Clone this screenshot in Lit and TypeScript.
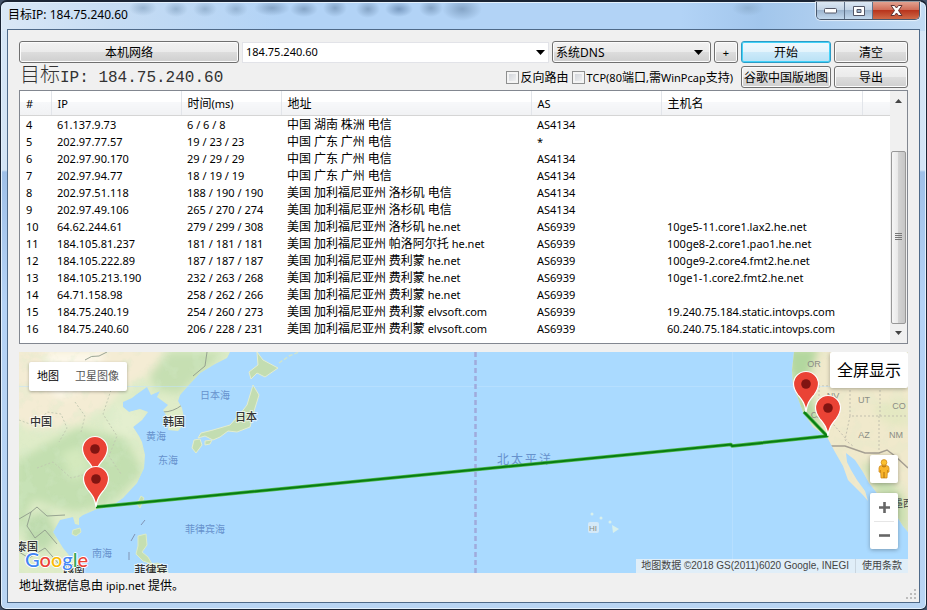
import { LitElement, html, css, svg } from "lit";
import { customElement, state } from "lit/decorators.js";

/** Sets Chinese runs one step larger than the Latin text around them. */
const mixed = (text: string) =>
  text
    .split(/([\u3000-\u9fff\uff00-\uffef]+)/)
    .filter((part) => part !== "")
    .map((part) => (/[\u3000-\u9fff\uff00-\uffef]/.test(part) ? html`<span class="han">${part}</span>` : part));

const columns = ["#", "IP", "时间(ms)", "地址", "AS", "主机名", ""];

const hops: string[][] = [
  ["4", "61.137.9.73", "6 / 6 / 8", "中国 湖南 株洲 电信", "AS4134", ""],
  ["5", "202.97.77.57", "19 / 23 / 23", "中国 广东 广州 电信", "*", ""],
  ["6", "202.97.90.170", "29 / 29 / 29", "中国 广东 广州 电信", "AS4134", ""],
  ["7", "202.97.94.77", "18 / 19 / 19", "中国 广东 广州 电信", "AS4134", ""],
  ["8", "202.97.51.118", "188 / 190 / 190", "美国 加利福尼亚州 洛杉矶 电信", "AS4134", ""],
  ["9", "202.97.49.106", "265 / 270 / 274", "美国 加利福尼亚州 洛杉矶 电信", "AS4134", ""],
  ["10", "64.62.244.61", "279 / 299 / 308", "美国 加利福尼亚州 洛杉矶 he.net", "AS6939", "10ge5-11.core1.lax2.he.net"],
  ["11", "184.105.81.237", "181 / 181 / 181", "美国 加利福尼亚州 帕洛阿尔托 he.net", "AS6939", "100ge8-2.core1.pao1.he.net"],
  ["12", "184.105.222.89", "187 / 187 / 187", "美国 加利福尼亚州 费利蒙 he.net", "AS6939", "100ge9-2.core4.fmt2.he.net"],
  ["13", "184.105.213.190", "232 / 263 / 268", "美国 加利福尼亚州 费利蒙 he.net", "AS6939", "10ge1-1.core2.fmt2.he.net"],
  ["14", "64.71.158.98", "258 / 262 / 266", "美国 加利福尼亚州 费利蒙 he.net", "AS6939", ""],
  ["15", "184.75.240.19", "254 / 260 / 273", "美国 加利福尼亚州 费利蒙 elvsoft.com", "AS6939", "19.240.75.184.static.intovps.com"],
  ["16", "184.75.240.60", "206 / 228 / 231", "美国 加利福尼亚州 费利蒙 elvsoft.com", "AS6939", "60.240.75.184.static.intovps.com"],
];

const pin = (x: number, y: number) => svg`
  <g transform="translate(${x} ${y})">
    <path d="M0 0C-1-9-4-12-8-17C-11-21-12.500-24-12.500-28A12.500 12.500 0 0 1 12.500-28C12.500-24 11-21 8-17C4-12 1-9 0 0Z" fill="#ea4335" stroke="#fff" stroke-width="1.200"/>
    <circle cy="-28" r="4.800" fill="#811411"/>
  </g>`;

const asia =
  "M0 0H211L208 6L196 12L181 21L168 35L161 43L159 49L163 56L166 71L159 79L149 78L150 68L144 58L149 53L138 45L141 39L132 43L128 35L118 42L113 46L104 50L104 55L110 60L121 57L129 60L123 68L114 75L120 84L123 90L126 103L125 116L118 131L104 146L91 155L78 157L64 163L60 166L60 173L56 172L54 165L41 168L34 180L44 196L58 213L59 221H0Z";
const america =
  "M775 0L773 18L774 33L784 60L794 75L808 85L816 100L824 114L829 128L844 143L849 149L846 139L838 128L832 118L828 110L827 101L836 108L844 120L850 131L862 146L874 158L884 174L889 180V0Z";
const japan =
  "M238 0L244 8L259 16L246 25L238 21L232 27L230 20L239 13ZM234 33L240 43L236 56L231 75L218 80L209 79L201 85L194 88L186 84L179 86L182 81L194 78L211 73L221 62L228 53ZM175 88L181 87L183 93L177 101L173 96ZM186 89L193 88L191 92L186 93Z";
const isles =
  "M122 144L125 146L121 156L118 152ZM54 178L61 176L62 180L57 184L53 182ZM119 184L127 182L128 193L123 200L129 205L133 212L124 209L117 202L119 194ZM127 213L139 211L147 216L149 221H131Z";

@customElement("app-root")
export class AppRoot extends LitElement {
  @state() private target = "184.75.240.60";

  static styles = css`
    :host {
      display: block;
      min-height: 100vh;
      background: #44536a;
      color: #000;
      font-family: "Noto Sans", "Noto Sans CJK SC", sans-serif;
      font-size: 11px;
      line-height: 17px;
    }
    * {
      box-sizing: border-box;
    }
    button,
    input,
    select {
      margin: 0;
      padding: 0;
      font: inherit;
      color: inherit;
    }
    .han {
      font-size: 12px;
    }
    .window {
      display: flex;
      flex-direction: column;
      min-height: 100vh;
      padding: 0 6px 6px;
      border: 1px solid #1a2434;
      border-top-width: 2px;
      border-radius: 7px 7px 6px 6px;
      box-shadow: inset 0 0 0 1px #e4f1fd;
      background:
        radial-gradient(ellipse 14px 8px at 142px 6px, #7d9cbb99, transparent),
        radial-gradient(ellipse 12px 8px at 175px 7px, #7d9cbb99, transparent),
        radial-gradient(ellipse 12px 8px at 204px 7px, #7d9cbb99, transparent),
        radial-gradient(ellipse 12px 8px at 235px 7px, #7d9cbb99, transparent),
        radial-gradient(ellipse 18px 8px at 271px 6px, #6685a799, transparent),
        radial-gradient(ellipse 14px 8px at 303px 7px, #6685a799, transparent),
        radial-gradient(ellipse 12px 9px at 334px 6px, #6685a799, transparent),
        radial-gradient(ellipse 12px 9px at 367px 7px, #6685a799, transparent),
        radial-gradient(ellipse 14px 8px at 398px 7px, #5c7ea6aa, transparent),
        radial-gradient(ellipse 12px 9px at 430px 6px, #6685a799, transparent),
        radial-gradient(ellipse 20px 12px at 461px 7px, #6685a799, transparent),
        radial-gradient(ellipse 16px 8px at 747px 6px, #84a5c499, transparent),
        linear-gradient(90deg, #dae8f6 0, #c6dcf3 110px, #b2d3f6 280px, #b2d3f6 680px, #a2c6ec 760px, #c3dbf3) 0 0 / 100% 29px no-repeat,
        linear-gradient(#d6e6f6, #d3e4f5 168px, #9fc0e8 170px, #b4d2f5 300px, #b9d5f4);
    }
    .titlebar {
      display: flex;
      justify-content: space-between;
      align-items: flex-start;
      height: 27px;
    }
    .title {
      margin: 0;
      padding: 4px 1px;
      font-size: 12px;
      font-weight: 400;
      line-height: 17px;
    }
    .caption {
      display: flex;
      height: 18px;
      border: 1px solid #48586d;
      border-top: 0;
      border-radius: 0 0 5px 5px;
      overflow: hidden;
      box-shadow: 0 0 1px 1px #ffffff99;
    }
    .caption-button {
      display: grid;
      place-items: center;
      width: 28px;
      border: 0;
      border-right: 1px solid #60728a;
      background: linear-gradient(#dce8f4, #c1d2e4 48%, #9db5cf 50%, #c2d8ed);
    }
    .caption-button.close {
      width: 46px;
      border-right: 0;
      background: linear-gradient(#e3a18f, #cf6b56 48%, #b8351d 50%, #cf6a48);
    }
    .client {
      flex: 1;
      display: flex;
      flex-direction: column;
      padding: 11px 11px 6px;
      border: 1px solid #4f6a89;
      background: #f0f0f0;
    }
    .bar {
      display: flex;
      align-items: center;
      gap: 3px;
      height: 22px;
    }
    .bar + .bar {
      height: 24px;
      margin-top: 2px;
      margin-bottom: 1px;
    }
    .push {
      height: 22px;
      padding-top: 1px;
      border: 1px solid #707070;
      border-radius: 3px;
      box-shadow: inset 0 0 0 1px #fcfcfc;
      background: linear-gradient(#f2f2f2, #ebebeb 48%, #dddddd 50%, #cfcfcf);
      white-space: nowrap;
      line-height: 18px;
    }
    .local {
      width: 220px;
    }
    .plus {
      width: 24px;
    }
    .main {
      width: 90px;
    }
    .side {
      width: 74px;
    }
    .start {
      border-color: #2c9cc6;
      box-shadow: inset 0 0 0 1px #43d2f8;
      background: linear-gradient(#f0f9fd, #e4f4fc 48%, #cdeafa 50%, #b9e1f5);
    }
    .combo {
      flex: 1;
      min-width: 0;
      display: flex;
      height: 21px;
      border: 1px solid #e2e3e8;
      background: #fff;
    }
    .combo-input {
      flex: 1;
      min-width: 0;
      padding: 0 3px 2px;
      border: 0;
      background: none;
      outline: 0;
    }
    .combo-arrow {
      display: grid;
      place-items: center;
      width: 15px;
      border: 0;
      background: none;
    }
    .dns {
      display: grid;
      grid-template-columns: 1fr 16px;
      align-items: center;
      width: 159px;
      height: 22px;
      border: 1px solid #707070;
      border-radius: 3px;
      box-shadow: inset 0 0 0 1px #fcfcfc;
      background: linear-gradient(#f2f2f2, #ebebeb 48%, #dddddd 50%, #cfcfcf);
    }
    .dns-select {
      grid-area: 1 / 1 / 2 / 3;
      width: 100%;
      height: 20px;
      padding: 0 3px;
      border: 0;
      background: none;
      appearance: none;
      font-size: 12px;
    }
    .dns-arrow {
      grid-area: 1 / 2;
      display: flex;
      pointer-events: none;
    }
    .heading {
      flex: 1;
      margin: 0;
      padding: 1px 0 0 1px;
      font-family: "Liberation Mono", "Noto Sans CJK SC", monospace;
      font-size: 16px;
      font-weight: 400;
      line-height: 22px;
      color: #333;
      white-space: pre;
    }
    .heading .han {
      font-size: 20px;
      font-weight: 300;
    }
    .check {
      display: flex;
      align-items: center;
      gap: 2px;
      white-space: nowrap;
    }
    .check.last {
      margin-right: 5px;
    }
    .check-box {
      appearance: none;
      width: 13px;
      height: 13px;
      border: 1px solid #8e8f8f;
      background: linear-gradient(135deg, #cbcfd5, #f6f6f6);
      box-shadow: inset 0 0 0 2px #f4f4f4;
    }
    .list {
      display: flex;
      min-height: 254px;
      border: 1px solid #828790;
      background: #fff;
    }
    .table {
      flex: 1;
      min-width: 0;
      table-layout: fixed;
      border-collapse: collapse;
      align-self: flex-start;
    }
    .c0 { width: 31px; }
    .c1 { width: 130px; }
    .c2 { width: 100px; }
    .c3 { width: 250px; }
    .c4 { width: 130px; }
    .c5 { width: 201px; }
    .th {
      height: 24px;
      padding: 1px 6px 0;
      border-right: 1px solid #e2e5ea;
      border-bottom: 1px solid #d5d5d5;
      background: linear-gradient(#fff, #fff 45%, #f7f8fa 47%, #f1f2f4);
      font-weight: 400;
      text-align: left;
      white-space: nowrap;
    }
    .th:last-child {
      border-right: 0;
    }
    .td {
      height: 17px;
      padding: 0 6px;
      line-height: 16px;
      white-space: nowrap;
    }
    .tbody::before {
      content: "";
      display: block;
      height: 1px;
    }
    .scroll {
      display: flex;
      flex-direction: column;
      width: 17px;
      padding: 1px;
      background: #f0f0f0;
    }
    .scroll-step {
      display: grid;
      place-items: center;
      height: 18px;
      border: 0;
      background: none;
    }
    .scroll-track {
      flex: 1;
      display: flex;
      flex-direction: column;
      justify-content: flex-end;
    }
    .scroll-thumb {
      display: grid;
      place-items: center;
      height: 81%;
      border: 1px solid #989898;
      border-radius: 2px;
      background: linear-gradient(90deg, #f6f6f6, #e8e8e8 48%, #d3d3d3 50%, #c6c6c6);
    }
    .map {
      position: relative;
      flex: 1;
      min-height: 221px;
      margin-top: 8px;
      overflow: hidden;
      background: #aadaff;
      font-family: "Liberation Sans", "Noto Sans CJK SC", sans-serif;
    }
    .map-art {
      position: absolute;
      inset: 0;
      width: 100%;
      height: 100%;
    }
    .map-types {
      position: absolute;
      top: 10px;
      left: 10px;
      display: flex;
      gap: 16px;
      padding: 0 8px;
      border-radius: 2px;
      background: #fff;
      box-shadow: 0 1px 3px #0000004d;
    }
    .map-type {
      height: 29px;
      border: 0;
      background: none;
      font-size: 11px;
      color: #555;
    }
    .map-type.active {
      color: #000;
    }
    .full {
      position: absolute;
      top: 0;
      right: 0;
      height: 36px;
      padding: 0 7px;
      border: 0;
      border-radius: 2px;
      background: #fff;
      box-shadow: 0 1px 4px #0000004d;
      font-size: 16px;
    }
    .controls {
      position: absolute;
      right: 10px;
      bottom: 24px;
      display: flex;
      flex-direction: column;
      gap: 10px;
    }
    .control {
      display: flex;
      flex-direction: column;
      align-items: center;
      width: 28px;
      border-radius: 2px;
      background: #fff;
      box-shadow: 0 1px 4px #0000004d;
    }
    .control-button {
      display: grid;
      place-items: center;
      width: 20px;
      height: 28px;
      border: 0;
      background: none;
    }
    .control-button + .control-button {
      border-top: 1px solid #e6e6e6;
    }
    .google {
      position: absolute;
      left: 6px;
      bottom: 1px;
      font-family: Lato, sans-serif;
      font-size: 20px;
      font-weight: 500;
      line-height: 26px;
      text-decoration: none;
      text-shadow: 1px 0 #fff, -1px 0 #fff, 0 1px #fff, 0 -1px #fff;
      color: #4285f4;
    }
    .g-red { color: #ea4335; }
    .g-yellow { color: #fbbc05; }
    .g-green { color: #34a853; }
    .legal {
      position: absolute;
      right: 0;
      bottom: 0;
      display: flex;
      gap: 6px;
      padding: 0 6px 0 5px;
      background: #f5f5f5b8;
      font-size: 10px;
      line-height: 14px;
      color: #444;
      white-space: nowrap;
    }
    .terms {
      padding-left: 6px;
      border-left: 1px solid #c9d5df;
      color: inherit;
      text-decoration: none;
    }
    .status {
      display: flex;
      justify-content: space-between;
      align-items: flex-start;
      height: 23px;
    }
    .credit {
      margin: 0;
      padding-top: 4px;
      line-height: 18px;
    }
    .grip {
      align-self: flex-end;
      margin: 0 -8px -3px 0;
    }
  `;

  private arrow = html`<svg width="9" height="5" viewBox="0 0 9 5"><path d="M0 0H9L4.500 5Z" fill="#000" /></svg>`;

  private renderMap() {
    return html`
      <svg class="map-art" viewBox="0 0 889 221" preserveAspectRatio="xMidYMid slice" role="img" aria-label="路由地图">
        <defs>
          <filter id="soft" x="-20%" y="-20%" width="140%" height="140%"><feGaussianBlur stdDeviation="4" /></filter>
          <filter id="fog" x="-5%" y="-5%" width="110%" height="110%">
            <feTurbulence type="fractalNoise" baseFrequency="0.07" numOctaves="4" seed="8" />
            <feColorMatrix values="0 0 0 0 .66  0 0 0 0 .83  0 0 0 0 .58  0 0 0 5 -2.500" />
          </filter>
          <clipPath id="asia"><path d=${asia} /></clipPath>
          <clipPath id="america"><path d=${america} /></clipPath>
        </defs>
        <rect width="889" height="221" fill="#aadaff" />
        <path d=${asia} fill="#dfecc8" />
        <g clip-path="url(#asia)">
          <g filter="url(#soft)">
            <path d="M-8-8H150L132 22L104 36L82 60L52 74L20 80L-8 68Z" fill="#f4ecd4" />
            <path d="M28 0H86L72 34L40 46L20 28Z" fill="#fdf8ea" />
            <path d="M150 0H206L160 42L138 38L130 22Z" fill="#c6dfb2" />
            <path d="M24 94L58 76L106 86L124 120L92 152L56 160L14 148L-4 186L-4 110Z" fill="#c3dfb0" />
            <path d="M42 102L62 94L72 116L54 130Z" fill="#d4e9bd" />
            <path d="M94 52L126 62L112 88L88 76Z" fill="#e4efcf" />
            <path d="M4 168L28 158L38 184L26 200L8 192Z" fill="#bedbae" />
          </g>
          <rect width="220" height="221" filter="url(#fog)" opacity=".26" />
          <g fill="none" stroke="#8f9b8b" stroke-width=".9">
            <path d="M66 8Q72 3 80 4L88 0M174 24L186 14L188 0M144 60Q154 60 163 53M0 167L12 160L18 155L28 164L46 163M12 160L8 174L16 186L26 178L38 192M0 200L10 206L26 196L40 212" />
            <path d="M0 68L16 74L28 60L42 62L48 76L40 90M56 50L66 64L62 80M92 38L84 62L98 84L90 104L102 122M18 116L34 110L52 126L76 120L82 140" stroke-dasharray="2 2" stroke="#c0c7b0" />
          </g>
        </g>
        <path d=${japan} fill="#c3ddb1" stroke="#e3edcf" />
        <path d=${isles} fill="#c5dfb1" stroke="#dcebc8" />
        <path d="M260 11L270 4L280 0" stroke="#cfe4cf" stroke-width="1.500" stroke-dasharray="4 2" fill="none" />
        <path d="M126 168L122 173M116 182L112 189M110 200V208" stroke="#8194b5" fill="none" />
        <path d=${america} fill="#f0e9cc" />
        <g clip-path="url(#america)">
          <g filter="url(#soft)">
            <path d="M768-4H800L790 24L794 52L806 80L780 60L770 20Z" fill="#b2d79f" />
            <path d="M838 0H889V30L862 34L850 14Z" fill="#dfe8c2" />
            <path d="M842 110L860 114L889 150V190L860 146Z" fill="#c9dfb0" />
            <path d="M852 54L889 46V76L866 72Z" fill="#e4e8c2" />
          </g>
          <rect x="768" width="121" height="190" filter="url(#fog)" opacity=".14" />
          <path d="M775 34H831V64H889M831 34H889M800 34V56L828 88M831 64L826 88L834 94M860 64V100M861 34V64" fill="none" stroke="#c2bfae" stroke-dasharray="2 2" />
          <path d="M810 94H826L846 101H860L868 98L876 104L889 116" fill="none" stroke="#a59f93" stroke-width="1.500" />
        </g>
        <path d="M0 34.500H889M713.500 0V221" stroke="#c2e5ff" opacity=".5" />
        <path d="M456.500 0V221" stroke="#a0abdc" stroke-width="2.500" stroke-dasharray="5 3" />
        <g fill="#d8f0ec"><circle cx="573" cy="162" r="1.500" /><circle cx="582" cy="166" r="1.500" /><circle cx="591" cy="170" r="1.500" /><path d="M593 173L600 177L594 181Z" /></g>
        <rect x="569" y="170" width="11" height="11" rx="2" fill="#d4e9f8" />
        <g font-family="Liberation Sans, Noto Sans CJK SC, sans-serif" text-anchor="middle">
          <g font-size="11" font-weight="500" fill="#333" stroke="#fff" stroke-width="2" stroke-opacity=".6" paint-order="stroke">
            <text x="22" y="74">中国</text><text x="155" y="74">韩国</text><text x="227" y="69">日本</text>
            <text x="8" y="199">泰国</text><text x="55" y="222">越南</text><text x="132" y="222">菲律宾</text>
          </g>
          <g font-size="10" fill="#6792cd">
            <text x="196" y="47">日本海</text><text x="137" y="88">黄海</text><text x="149" y="112">东海</text>
            <text x="186" y="181">菲律宾海</text><text x="83" y="205">南海</text>
          </g>
          <text x="506" y="112" font-size="12" letter-spacing="2" fill="#6792cd">北太平洋</text>
          <g font-size="9" fill="#8b8d85">
            <text x="574" y="179" font-size="8">HI</text><text x="795" y="15">OR</text><text x="814" y="47">NV</text><text x="845" y="51">UT</text><text x="880" y="57">CO</text>
            <text x="798" y="66">CA</text><text x="845" y="86">AZ</text><text x="877" y="86">NM</text>
          </g>
          <text x="889" y="155" font-size="10" fill="#444">墨西哥</text>
        </g>
        <g fill="none" stroke-linejoin="round">
          <path d="M77 155L712 92.500L713 94L808 84L785 60" stroke="#4db74d" stroke-width="3.500" />
          <path d="M77 155L712 92.500L713 94L808 84L785 60" stroke="#087d12" stroke-width="2" />
        </g>
        ${pin(76, 125)} ${pin(77, 155)} ${pin(787, 60)} ${pin(809, 84)}
      </svg>
      <div class="map-types">
        <button class="map-type active">地图</button><button class="map-type">卫星图像</button>
      </div>
      <button class="full">全屏显示</button>
      <div class="controls">
        <div class="control">
          <button class="control-button" aria-label="街景小人">
            <svg width="12" height="20" viewBox="0 0 12 20">
              <path d="M3.500 6.500H8.500Q11 6.800 11 9V13L9.500 13.500V11L9 19H3L2.500 11V13.500L1 13V9Q1 6.800 3.500 6.500Z" fill="#f9b52b" stroke="#c98212" stroke-width=".7" />
              <circle cx="6" cy="3.500" r="2.900" fill="#fbc02f" stroke="#c98212" stroke-width=".7" />
              <path d="M6 13V19M4 7Q6 9 8 7" stroke="#b06f0c" fill="none" />
            </svg>
          </button>
        </div>
        <div class="control">
          <button class="control-button" aria-label="放大"><svg width="11" height="11" viewBox="0 0 11 11"><path d="M5.500 0V11M0 5.500H11" stroke="#666" stroke-width="2.600" /></svg></button>
          <button class="control-button" aria-label="缩小"><svg width="11" height="11" viewBox="0 0 11 11"><path d="M0 5.500H11" stroke="#666" stroke-width="2.600" /></svg></button>
        </div>
      </div>
      <a class="google" href="#" aria-label="Google">G<span class="g-red">o</span><span class="g-yellow">o</span>g<span class="g-green">l</span><span class="g-red">e</span></a>
      <div class="legal"><span>地图数据 ©2018 GS(2011)6020 Google, INEGI</span><a class="terms" href="#">使用条款</a></div>
    `;
  }

  render() {
    return html`
      <div class="window">
        <header class="titlebar">
          <h1 class="title">目标IP: ${this.target}</h1>
          <div class="caption">
            <button class="caption-button" aria-label="最小化"><svg width="13" height="6" viewBox="0 0 13 6"><rect x=".5" y=".5" width="12" height="4.500" rx="1" fill="#fff" stroke="#535666" /></svg></button>
            <button class="caption-button" aria-label="最大化"><svg width="12" height="10" viewBox="0 0 12 10"><path d="M.5.5H11.500V9.500H.5ZM4 3.500V6.500H8V3.500Z" fill="#fff" fill-rule="evenodd" stroke="#535666" /></svg></button>
            <button class="caption-button close" aria-label="关闭"><svg width="13" height="11" viewBox="0 0 13 11"><path d="M1 .5H4.500L6.500 3L8.500.5H12L8.500 5.500L12 10.500H8.500L6.500 8L4.500 10.500H1L4.500 5.500Z" fill="#fff" stroke="#5f3434" /></svg></button>
          </div>
        </header>
        <main class="client">
          <div class="bar">
            <button class="push local">${mixed("本机网络")}</button>
            <div class="combo">
              <input class="combo-input" aria-label="目标地址" .value=${this.target} @change=${(e: Event) => (this.target = (e.target as HTMLInputElement).value)} />
              <button class="combo-arrow" aria-label="历史记录">${this.arrow}</button>
            </div>
            <div class="dns">
              <select class="dns-select" aria-label="DNS"><option>系统DNS</option></select>
              <span class="dns-arrow">${this.arrow}</span>
            </div>
            <button class="push plus">+</button>
            <button class="push main start">${mixed("开始")}</button>
            <button class="push side">${mixed("清空")}</button>
          </div>
          <div class="bar">
            <h2 class="heading">${mixed(`目标IP: ${this.target}`)}</h2>
            <label class="check"><input class="check-box" type="checkbox" /><span>${mixed("反向路由")}</span></label>
            <label class="check last"><input class="check-box" type="checkbox" /><span>${mixed("TCP(80端口,需WinPcap支持)")}</span></label>
            <button class="push main">${mixed("谷歌中国版地图")}</button>
            <button class="push side">${mixed("导出")}</button>
          </div>
          <div class="list">
            <table class="table">
              <thead>
                <tr>${columns.map((name, i) => html`<th class="th c${i}">${mixed(name)}</th>`)}</tr>
              </thead>
              <tbody class="tbody">
                ${hops.map((hop) => html`<tr>${hop.map((cell) => html`<td class="td">${mixed(cell)}</td>`)}</tr>`)}
              </tbody>
            </table>
            <div class="scroll">
              <button class="scroll-step" aria-label="向上"><svg width="7" height="4" viewBox="0 0 7 4"><path d="M0 4H7L3.500 0Z" fill="#444" /></svg></button>
              <div class="scroll-track">
                <div class="scroll-thumb"><svg width="7" height="8" viewBox="0 0 7 8"><path d="M0 .5H7M0 2.500H7M0 4.500H7M0 6.500H7" stroke="#777" /></svg></div>
              </div>
              <button class="scroll-step" aria-label="向下"><svg width="7" height="4" viewBox="0 0 7 4"><path d="M0 0H7L3.500 4Z" fill="#444" /></svg></button>
            </div>
          </div>
          <section class="map">${this.renderMap()}</section>
          <footer class="status">
            <p class="credit">${mixed("地址数据信息由 ipip.net 提供。")}</p>
            <svg class="grip" width="10" height="10" viewBox="0 0 10 10"><path d="M8 0h2v2H8zM4 4h2v2H4zM8 4h2v2H8zM0 8h2v2H0zM4 8h2v2H4zM8 8h2v2H8z" fill="#bcbcbc" /></svg>
          </footer>
        </main>
      </div>
    `;
  }
}
